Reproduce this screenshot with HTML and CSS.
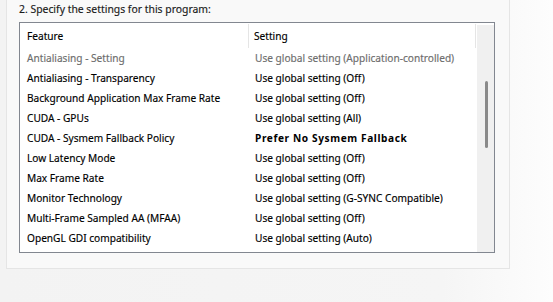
FILE: index.html
```html
<!DOCTYPE html>
<html>
<head>
<meta charset="utf-8">
<link rel="stylesheet" href="styles.css">
</head>
<body>
<div class="panel">
  <div class="title">2. Specify the settings for this program:</div>
  <div class="list">
    <div class="table">
      <div class="header">
        <div class="hcell c1">Feature</div>
        <div class="hcell c2">Setting</div>
      </div>
      <div class="row disabled"><div class="c1">Antialiasing - Setting</div><div class="c2">Use global setting (Application-controlled)</div></div>
      <div class="row"><div class="c1">Antialiasing - Transparency</div><div class="c2">Use global setting (Off)</div></div>
      <div class="row"><div class="c1">Background Application Max Frame Rate</div><div class="c2">Use global setting (Off)</div></div>
      <div class="row"><div class="c1">CUDA - GPUs</div><div class="c2">Use global setting (All)</div></div>
      <div class="row"><div class="c1">CUDA - Sysmem Fallback Policy</div><div class="c2 bold">Prefer No Sysmem Fallback</div></div>
      <div class="row"><div class="c1">Low Latency Mode</div><div class="c2">Use global setting (Off)</div></div>
      <div class="row"><div class="c1">Max Frame Rate</div><div class="c2">Use global setting (Off)</div></div>
      <div class="row"><div class="c1">Monitor Technology</div><div class="c2">Use global setting (G-SYNC Compatible)</div></div>
      <div class="row"><div class="c1">Multi-Frame Sampled AA (MFAA)</div><div class="c2">Use global setting (Off)</div></div>
      <div class="row"><div class="c1">OpenGL GDI compatibility</div><div class="c2">Use global setting (Auto)</div></div>
    </div>
    <div class="scrollbar"><div class="thumb"></div></div>
  </div>
</div>
</body>
</html>
```
FILE: styles.css
```css
html, body {
  margin: 0;
  padding: 0;
}
body {
  width: 553px;
  height: 302px;
  overflow: hidden;
  background: linear-gradient(90deg, #f3f3f3 0%, #f5f5f5 80%, #fdfdfd 100%);
  font-family: "Noto Sans", "Segoe UI", sans-serif;
  font-size: 10.15px;
  color: #000;
  -webkit-text-stroke: 0.15px currentColor;
}
.panel {
  margin-left: 6px;
  width: 504px;
  height: 269px;
  box-sizing: border-box;
  background: #f9f9f9;
  border: 1px solid #e5e5e5;
  border-top: none;
  padding-left: 12px;
  display: flex;
  flex-direction: column;
}
.title {
  height: 22px;
  line-height: 18px;
  font-size: 10.4px;
  color: #1a1a1a;
}
.list {
  width: 476px;
  height: 231px;
  box-sizing: border-box;
  border: 1px solid #828790;
  background: #fff;
  display: flex;
}
.table {
  flex: 1;
  min-width: 0;
  overflow: hidden;
}
.header {
  display: flex;
  height: 25px;
}
.hcell {
  height: 24px;
  line-height: 24px;
  margin-top: 1px;
}
.hcell.c2 {
  border-left: 1px solid #e5e5e5;
  border-right: 1px solid #e5e5e5;
  padding-left: 5px;
  width: 221px;
}
.c1 {
  width: 221px;
  flex: none;
  padding-left: 7px;
  white-space: nowrap;
}
.c2 {
  padding-left: 6px;
  white-space: nowrap;
}
.row {
  display: flex;
  height: 20px;
  line-height: 20px;
}
.row .c1 {
  width: 222px;
}
.disabled {
  color: #6d6d6d;
}
.bold {
  font-weight: bold;
  letter-spacing: 0.6px;
  -webkit-text-stroke: 0;
}
.scrollbar {
  width: 17px;
  flex: none;
  background: #f0f0f0;
  display: flex;
  justify-content: center;
  margin-top: 2px;
}
.thumb {
  width: 3px;
  height: 67px;
  margin-top: 56px;
  margin-left: 1px;
  border-radius: 2px;
  background: #8a8a8a;
}
```
